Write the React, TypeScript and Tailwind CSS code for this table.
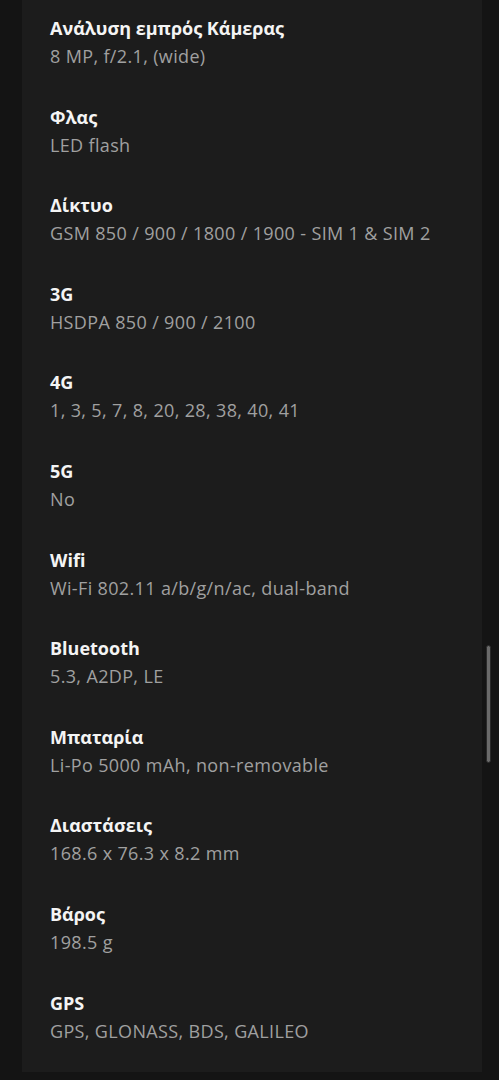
const specs = [
  { label: "Ανάλυση εμπρός Κάμερας", value: "8 MP, f/2.1, (wide)" },
  { label: "Φλας", value: "LED flash" },
  { label: "Δίκτυο", value: "GSM 850 / 900 / 1800 / 1900 - SIM 1 & SIM 2" },
  { label: "3G", value: "HSDPA 850 / 900 / 2100" },
  { label: "4G", value: "1, 3, 5, 7, 8, 20, 28, 38, 40, 41" },
  { label: "5G", value: "No" },
  { label: "Wifi", value: "Wi-Fi 802.11 a/b/g/n/ac, dual-band" },
  { label: "Bluetooth", value: "5.3, A2DP, LE" },
  { label: "Μπαταρία", value: "Li-Po 5000 mAh, non-removable" },
  { label: "Διαστάσεις", value: "168.6 x 76.3 x 8.2 mm" },
  { label: "Βάρος", value: "198.5 g" },
  { label: "GPS", value: "GPS, GLONASS, BDS, GALILEO" },
]

export default function App() {
  return (
    <div className="relative min-h-[1080px] bg-[#141414] pl-[22px] pr-[17px] pb-[8px] font-['Open_Sans',sans-serif]">
      {/* Specs card */}
      <div className="bg-[#1c1c1c] pl-[28px] pr-4 pt-[14px] pb-[27px]">
        {specs.map((spec, idx) => (
          <div key={spec.label} className={idx < specs.length - 1 ? "pb-[32.6px]" : ""}>
            <div className="text-[18px] leading-[28px] font-bold text-[#f4f4f4]">{spec.label}</div>
            <div className="text-[18px] leading-[28px] tracking-[0.35px] text-[#a0a0a0]">{spec.value}</div>
          </div>
        ))}
      </div>

      {/* Scrollbar thumb */}
      <div className="absolute left-[486px] top-[645px] w-[5px] h-[118px] rounded-full bg-[#6a6a6a] border border-[#2a2a2a]"></div>
    </div>
  )
}
